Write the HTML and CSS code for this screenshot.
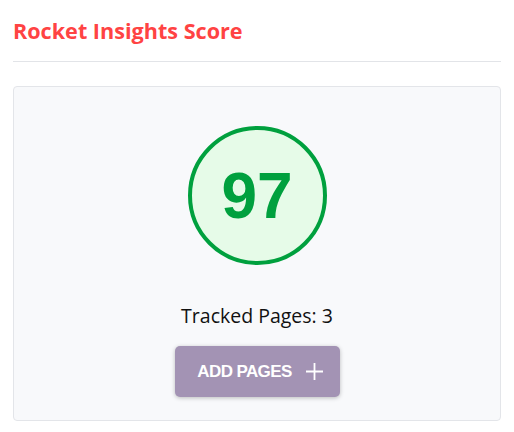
FILE: index.html
```html
<!DOCTYPE html>
<html lang="en">
<head>
  <meta charset="UTF-8">
  <meta name="viewport" content="width=device-width, initial-scale=1.0">
  <title>Rocket Insights Score</title>
  <link rel="stylesheet" href="styles.css">
</head>
<body>
  <div class="widget">
    <!-- title -->
    <h2 class="title">Rocket Insights Score</h2>

    <!-- score card -->
    <div class="card">
      <div class="score">97</div>
      <div class="tracked">Tracked Pages: 3</div>
      <button class="add-btn">
        <span>ADD PAGES</span>
        <svg class="plus" width="17" height="17" viewBox="0 0 16 16" aria-hidden="true">
          <path d="M8 0v16M0 8h16" stroke="#fff" stroke-width="1.7" fill="none"/>
        </svg>
      </button>
    </div>
  </div>
</body>
</html>
```

FILE: styles.css
```css
html, body {
  margin: 0;
  padding: 0;
  background: #fff;
  font-family: "Open Sans", "Noto Sans", Arial, sans-serif;
}
.widget {
  padding: 0 13px;
}
.title {
  margin: 0;
  padding: 16px 0 16px;
  font-size: 21.6px;
  font-weight: 700;
  color: #ff4343;
  border-bottom: 1px solid #e2e4e8;
}
.card {
  margin-top: 24px;
  background: #f8f9fb;
  border: 1px solid #e3e5e9;
  border-radius: 4px;
  display: flex;
  flex-direction: column;
  align-items: center;
  padding: 39px 0 23px;
}
.score {
  box-sizing: border-box;
  width: 139px;
  height: 139px;
  border: 4px solid #00a03e;
  border-radius: 50%;
  background: #e6fbe8;
  color: #00a03e;
  display: flex;
  align-items: center;
  justify-content: center;
  font-family: "Liberation Sans", Arial, sans-serif;
  font-weight: 700;
  font-size: 64px;
}
.tracked {
  margin-top: 37px;
  font-size: 19.5px;
  color: #111;
}
.add-btn {
  margin-top: 17px;
  width: 165px;
  height: 51px;
  border: none;
  border-radius: 5px;
  background: #a393b4;
  color: #fff;
  display: flex;
  align-items: center;
  justify-content: center;
  gap: 14px;
  padding: 0 0 0 6px;
  font-family: "Liberation Sans", Arial, sans-serif;
  font-weight: 700;
  font-size: 17px;
  letter-spacing: -0.6px;
  box-shadow: 0 1px 4px rgba(0, 0, 0, 0.25);
  cursor: pointer;
}
```
